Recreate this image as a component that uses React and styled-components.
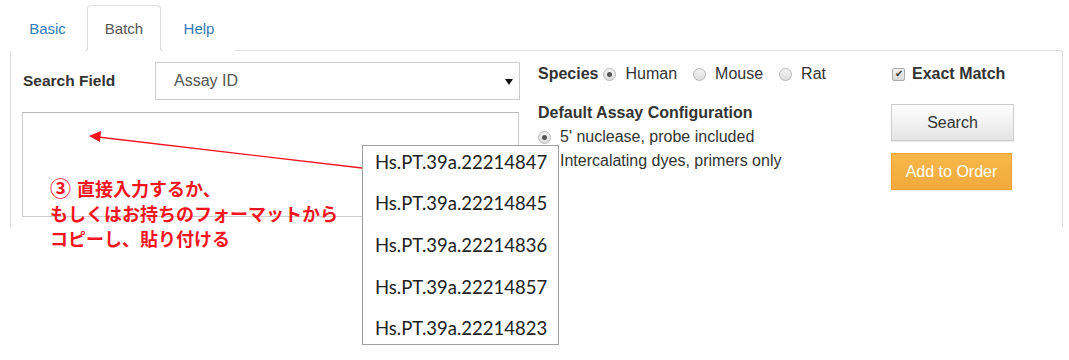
import React from 'react';
import styled, { createGlobalStyle } from 'styled-components';

const GlobalStyle = createGlobalStyle`
  html, body { margin: 0; padding: 0; background: #fff; }
  body { font-family: "Liberation Sans", Arial, sans-serif; font-size: 16px; color: #333; }
`;

const Page = styled.div`
  position: relative;
  width: 1069px;
  height: 360px;
  padding-top: 4px;
  box-sizing: border-box;
  overflow: hidden;
`;

const TabBar = styled.div`
  display: flex;
  align-items: flex-end;
  height: 46px;
  padding-left: 10px;
`;

const Tab = styled.div`
  width: ${p => p.w}px;
  height: 46px;
  margin-right: 2px;
  display: flex;
  align-items: center;
  justify-content: center;
  box-sizing: border-box;
  font-size: 15px;
  color: ${p => (p.active ? '#555' : '#337ab7')};
  border: 1px solid ${p => (p.active ? '#ddd' : 'transparent')};
  border-bottom-color: ${p => (p.active ? '#fff' : 'transparent')};
  border-radius: 4px 4px 0 0;
  background: #fff;
  margin-bottom: -1px;
  position: relative;
  z-index: 1;
`;

const Panel = styled.div`
  margin: 0 6px 0 10px;
  height: 177px;
  box-sizing: border-box;
  border: 1px solid #ddd;
  border-bottom: none;
  border-top-right-radius: 3px;
  padding: 11px 0 0 11px;
  display: flex;
`;

const LeftCol = styled.div`
  width: 498px;
  display: flex;
  flex-direction: column;
`;

const FieldRow = styled.div`
  display: flex;
  align-items: center;
`;

const Label = styled.div`
  width: 133px;
  padding-left: 1px;
  box-sizing: border-box;
  font-weight: bold;
  font-size: 15.5px;
  color: #333;
`;

const Select = styled.div`
  width: 365px;
  height: 38px;
  box-sizing: border-box;
  border: 1px solid #ccc;
  display: flex;
  align-items: center;
  justify-content: space-between;
  padding: 0 6px 0 18px;
  font-size: 16px;
  color: #555;
`;

const Caret = styled.span`
  width: 0;
  height: 0;
  border-left: 4px solid transparent;
  border-right: 4px solid transparent;
  border-top: 6px solid #111;
  margin-top: 1px;
`;

const TextArea = styled.div`
  margin-top: 12px;
  width: 497px;
  height: 105px;
  box-sizing: border-box;
  border: 1px solid #ccc;
  border-top-color: #bbb;
`;

const MidCol = styled.div`
  margin-left: 18px;
  width: 353px;
  display: flex;
  flex-direction: column;
`;

const Line = styled.div`
  display: flex;
  align-items: center;
  height: ${p => p.h || 24}px;
  margin-top: ${p => p.mt || 0}px;
  font-size: 16px;
  color: #333;
  white-space: nowrap;
`;

const Strong = styled.span`
  font-weight: bold;
  margin-right: ${p => p.mr || 0}px;
`;

const Radio = styled.span`
  flex: none;
  width: 11px;
  height: 11px;
  border-radius: 50%;
  border: 1px solid #b5b5b5;
  background: linear-gradient(#f4f4f4, #dcdcdc);
  display: inline-flex;
  align-items: center;
  justify-content: center;
  margin: 0 9px 0 ${p => p.ml || 0}px;
  &::after {
    content: '';
    width: 5px;
    height: 5px;
    border-radius: 50%;
    background: ${p => (p.on ? '#555' : 'transparent')};
  }
`;

const RightCol = styled.div`
  display: flex;
  flex-direction: column;
`;

const CheckBox = styled.span`
  width: 11px;
  height: 11px;
  border: 1px solid #aaa;
  border-radius: 2px;
  background: linear-gradient(#f2f2f2, #d8d8d8);
  display: inline-flex;
  align-items: center;
  justify-content: center;
  margin: 0 7px 0 1px;
  font-size: 10px;
  line-height: 1;
  color: #333;
`;

const Button = styled.div`
  width: ${p => p.w}px;
  height: 37px;
  box-sizing: border-box;
  margin-top: ${p => p.mt}px;
  display: flex;
  align-items: center;
  justify-content: center;
  font-size: 16px;
  border: 1px solid ${p => (p.primary ? '#eea236' : '#ccc')};
  color: ${p => (p.primary ? '#fff' : '#333')};
  background: ${p => (p.primary ? 'linear-gradient(#f8b84a, #f0a93d)' : 'linear-gradient(#fff, #e4e4e4)')};
  box-shadow: 0 1px 1px rgba(0,0,0,0.08);
`;

const Popup = styled.div`
  position: absolute;
  left: 362px;
  top: 145px;
  width: 197px;
  height: 200px;
  box-sizing: border-box;
  border: 1px solid #a0a0a0;
  background: #fff;
  display: flex;
  flex-direction: column;
  gap: 10px;
  z-index: 3;
`;

const PopupItem = styled.div`
  height: 32px;
  display: flex;
  align-items: center;
  padding-left: 12px;
  font-family: Lato, "Open Sans", sans-serif;
  font-size: 18.5px;
  color: #222;
`;

const Note = styled.div`
  position: absolute;
  left: 50px;
  top: 175px;
  font-family: "Noto Sans CJK JP", "Noto Sans", sans-serif;
  font-weight: bold;
  font-size: 18px;
  line-height: 25px;
  color: #f5141e;
  z-index: 2;
`;

const Circled = styled.span`
  font-size: 21px;
  margin-right: 2px;
`;

const Arrow = styled.svg`
  position: absolute;
  left: 0;
  top: 0;
  z-index: 2;
  pointer-events: none;
`;

const ids = ['22214847', '22214845', '22214836', '22214857', '22214823'];

export default function App() {
  return (
    <Page>
      <GlobalStyle />
      <TabBar>
        <Tab w={75}>Basic</Tab>
        <Tab w={74} active>Batch</Tab>
        <Tab w={72}>Help</Tab>
      </TabBar>
      <Panel>
        <LeftCol>
          <FieldRow>
            <Label>Search Field</Label>
            <Select>
              <span>Assay ID</span>
              <Caret />
            </Select>
          </FieldRow>
          <TextArea />
        </LeftCol>
        <MidCol>
          <Line>
            <Strong mr={5}>Species</Strong>
            <Radio on />Human
            <Radio ml={16} />Mouse
            <Radio ml={16} />Rat
          </Line>
          <Line mt={15}>
            <Strong>Default Assay Configuration</Strong>
          </Line>
          <Line>
            <Radio on />
            5' nuclease, probe included
          </Line>
          <Line>
            <Radio />
            Intercalating dyes, primers only
          </Line>
        </MidCol>
        <RightCol>
          <Line>
            <CheckBox>✔</CheckBox>
            <Strong>Exact Match</Strong>
          </Line>
          <Button w={123} mt={18}>Search</Button>
          <Button w={121} mt={12} primary>Add to Order</Button>
        </RightCol>
      </Panel>
      <Arrow width="1069" height="360">
        <line x1="362" y1="168" x2="98" y2="137" stroke="#f5141e" strokeWidth="1.3" />
        <polygon points="89,136 101,131 100,142" fill="#f5141e" />
      </Arrow>
      <Note>
        <Circled>③</Circled> 直接入力するか、<br />
        もしくはお持ちのフォーマットから<br />
        コピーし、貼り付ける
      </Note>
      <Popup>
        {ids.map(id => (
          <PopupItem key={id}>Hs.PT.39a.{id}</PopupItem>
        ))}
      </Popup>
    </Page>
  );
}
